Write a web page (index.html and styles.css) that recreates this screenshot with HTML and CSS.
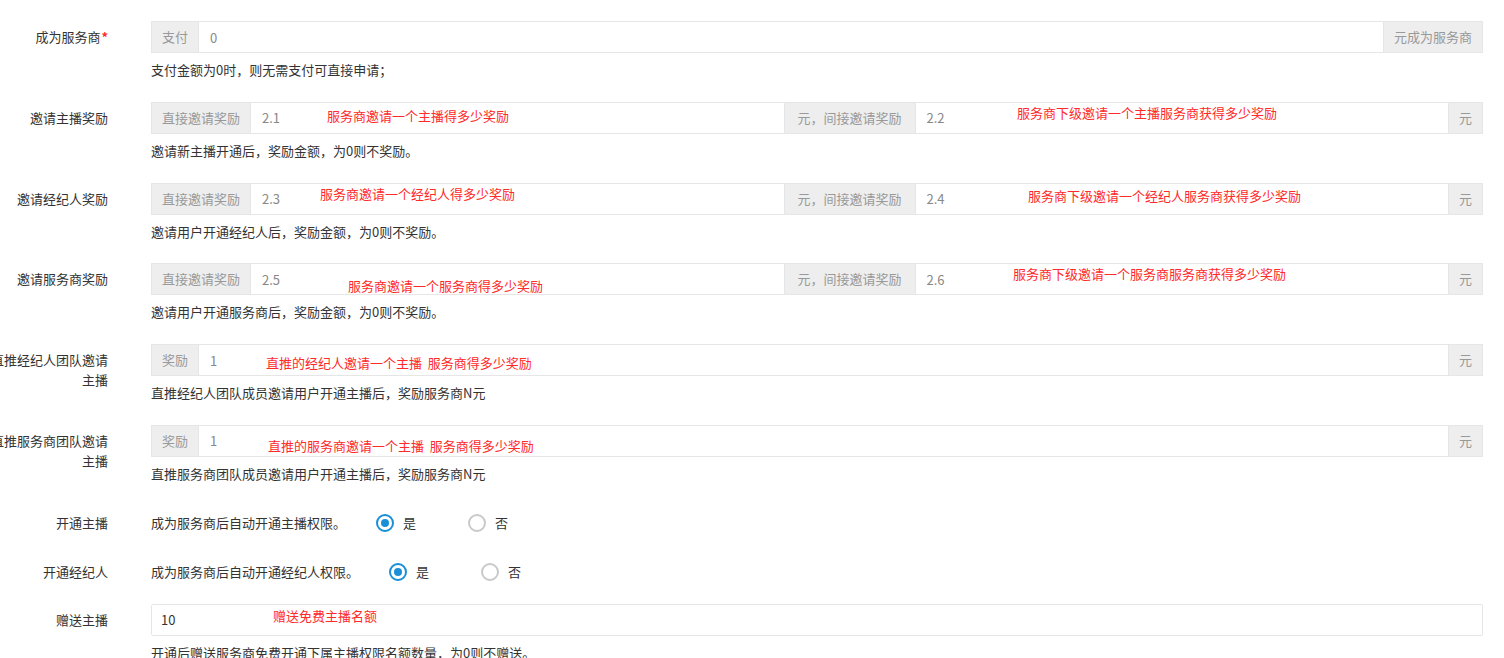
FILE: index.html
```html
<!DOCTYPE html>
<html lang="zh-CN">
<head>
    <meta charset="UTF-8">
    <meta name="viewport" content="width=device-width, initial-scale=1.0">
    <title>服务商设置</title>
    <link rel="stylesheet" href="styles.css">
</head>
<body>
    <form class="form">
        <div class="item">
            <label class="label">成为服务商<span class="req">*</span></label>
            <div class="block">
                <div class="group">
                    <span class="addon">支付</span>
                    <input class="field" type="text" value="0">
                    <span class="addon">元成为服务商</span>
                </div>
                <div class="help">支付金额为0时，则无需支付可直接申请；</div>
            </div>
        </div>

        <div class="item">
            <label class="label">邀请主播奖励</label>
            <div class="block">
                <div class="group">
                    <span class="addon">直接邀请奖励</span>
                    <input class="field" type="text" value="2.1">
                    <span class="addon wide">元，间接邀请奖励</span>
                    <input class="field" type="text" value="2.2">
                    <span class="addon">元</span>
                    <span class="note n1">服务商邀请一个主播得多少奖励</span>
                    <span class="note n2">服务商下级邀请一个主播服务商获得多少奖励</span>
                </div>
                <div class="help">邀请新主播开通后，奖励金额，为0则不奖励。</div>
            </div>
        </div>

        <div class="item">
            <label class="label">邀请经纪人奖励</label>
            <div class="block">
                <div class="group">
                    <span class="addon">直接邀请奖励</span>
                    <input class="field" type="text" value="2.3">
                    <span class="addon wide">元，间接邀请奖励</span>
                    <input class="field" type="text" value="2.4">
                    <span class="addon">元</span>
                    <span class="note n3">服务商邀请一个经纪人得多少奖励</span>
                    <span class="note n4">服务商下级邀请一个经纪人服务商获得多少奖励</span>
                </div>
                <div class="help">邀请用户开通经纪人后，奖励金额，为0则不奖励。</div>
            </div>
        </div>

        <div class="item">
            <label class="label">邀请服务商奖励</label>
            <div class="block">
                <div class="group">
                    <span class="addon">直接邀请奖励</span>
                    <input class="field" type="text" value="2.5">
                    <span class="addon wide">元，间接邀请奖励</span>
                    <input class="field" type="text" value="2.6">
                    <span class="addon">元</span>
                    <span class="note n5">服务商邀请一个服务商得多少奖励</span>
                    <span class="note n6">服务商下级邀请一个服务商服务商获得多少奖励</span>
                </div>
                <div class="help">邀请用户开通服务商后，奖励金额，为0则不奖励。</div>
            </div>
        </div>

        <div class="item">
            <label class="label">直推经纪人团队邀请主播</label>
            <div class="block">
                <div class="group">
                    <span class="addon">奖励</span>
                    <input class="field" type="text" value="1">
                    <span class="addon">元</span>
                    <span class="note n7">直推的经纪人邀请一个主播&nbsp;&nbsp;服务商得多少奖励</span>
                </div>
                <div class="help">直推经纪人团队成员邀请用户开通主播后，奖励服务商N元</div>
            </div>
        </div>

        <div class="item">
            <label class="label">直推服务商团队邀请主播</label>
            <div class="block">
                <div class="group">
                    <span class="addon">奖励</span>
                    <input class="field" type="text" value="1">
                    <span class="addon">元</span>
                    <span class="note n8">直推的服务商邀请一个主播&nbsp;&nbsp;服务商得多少奖励</span>
                </div>
                <div class="help">直推服务商团队成员邀请用户开通主播后，奖励服务商N元</div>
            </div>
        </div>

        <div class="item radio-item">
            <label class="label">开通主播</label>
            <div class="block inline">
                <span class="text">成为服务商后自动开通主播权限。</span>
                <span class="radio checked"><i class="dot"></i>是</span>
                <span class="radio"><i class="dot"></i>否</span>
            </div>
        </div>

        <div class="item radio-item">
            <label class="label">开通经纪人</label>
            <div class="block inline">
                <span class="text">成为服务商后自动开通经纪人权限。</span>
                <span class="radio checked"><i class="dot"></i>是</span>
                <span class="radio"><i class="dot"></i>否</span>
            </div>
        </div>

        <div class="item">
            <label class="label">赠送主播</label>
            <div class="block">
                <div class="group">
                    <input class="field plain" type="text" value="10">
                    <span class="note n9">赠送免费主播名额</span>
                </div>
                <div class="help">开通后赠送服务商免费开通下属主播权限名额数量，为0则不赠送。</div>
            </div>
        </div>
    </form>
</body>
</html>
```

FILE: styles.css
```css
body {
    margin: 0;
    font-family: "Noto Sans CJK SC", "Liberation Sans", sans-serif;
    font-size: 13px;
    color: #333;
    background: #fff;
    overflow: hidden;
}
.form {
    padding: 21px 21px 0 0;
}
.item {
    display: flex;
    margin-bottom: 22.8px;
}
.label {
    flex: none;
    width: 120px;
    margin-left: -12px;
    padding-top: 6px;
    line-height: 20px;
    text-align: right;
    color: #333;
}
.req {
    color: #ff2a2a;
    font-weight: bold;
    margin-left: 1px;
}
.block {
    flex: 1;
    margin-left: 43px;
}
.group {
    position: relative;
    display: flex;
    height: 32px;
}
.addon {
    flex: none;
    padding: 0 10px;
    line-height: 30px;
    background: #eee;
    border: 1px solid #e6e6e6;
    color: #999;
    white-space: nowrap;
}
.addon.wide {
    padding: 0 13px;
}
.field {
    flex: 1;
    min-width: 0;
    height: 32px;
    box-sizing: border-box;
    padding: 0 11px;
    border: 1px solid #e6e6e6;
    border-left: none;
    border-right: none;
    font-family: inherit;
    font-size: 13px;
    color: #888;
    outline: none;
}
.field.plain {
    border: 1px solid #e6e6e6;
    border-radius: 2px;
    padding-left: 9px;
    color: #333;
}
.help {
    margin-top: 8px;
    line-height: 18px;
    color: #333;
}
.note {
    position: absolute;
    line-height: 18px;
    color: #ff2a2a;
    white-space: nowrap;
}
.n1 { left: 176px; top: 5px; }
.n2 { left: 866px; top: 2px; }
.n3 { left: 169px; top: 2px; }
.n4 { left: 877px; top: 4px; }
.n5 { left: 197px; top: 14px; }
.n6 { left: 862px; top: 2px; }
.n7 { left: 115px; top: 10px; }
.n8 { left: 117px; top: 12px; }
.n9 { left: 122px; top: 3px; }

.radio-item {
    margin-bottom: 15px;
}
.radio-item .label {
    padding-top: 7px;
}
.inline {
    display: flex;
    align-items: center;
    height: 34px;
}
.radio {
    display: inline-flex;
    align-items: center;
    margin-left: 30px;
    margin-right: 29px;
    color: #333;
}
.radio + .radio {
    margin-left: 23px;
}
.dot {
    position: relative;
    width: 18px;
    height: 18px;
    box-sizing: border-box;
    border: 2px solid #c9c9c9;
    border-radius: 50%;
    margin-right: 9px;
}
.radio.checked .dot {
    border-color: #1a8fd6;
}
.radio.checked .dot::after {
    content: "";
    position: absolute;
    left: 3px;
    top: 3px;
    width: 8px;
    height: 8px;
    border-radius: 50%;
    background: #1a8fd6;
}
```
